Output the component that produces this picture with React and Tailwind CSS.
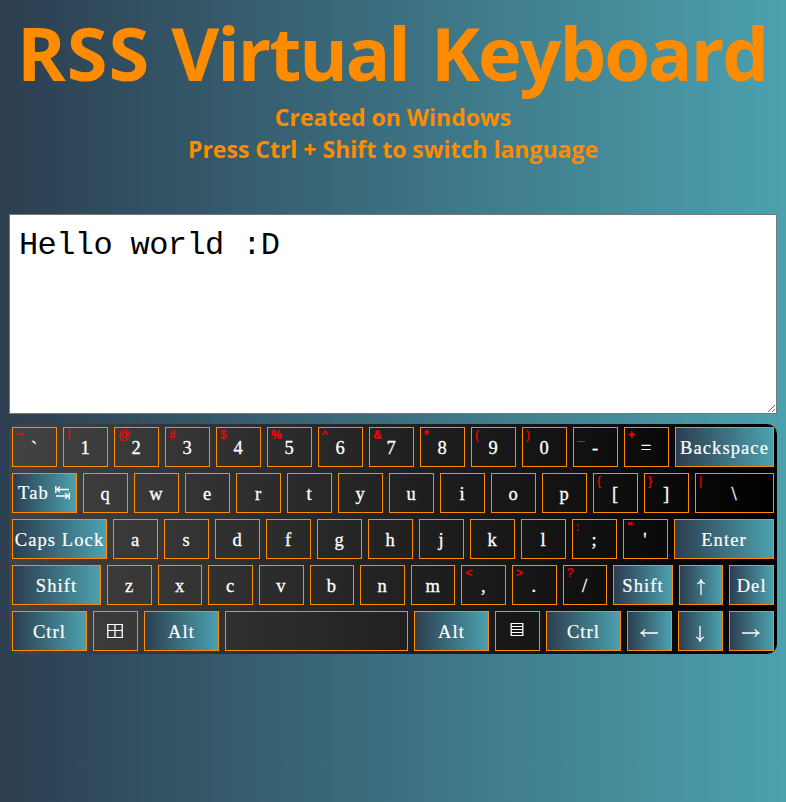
const SERIF = "font-['Liberation_Serif','DejaVu_Sans',serif]";

const WinIcon = () => (
  <svg width="16" height="14" viewBox="0 0 16 14" className="-mt-[1px]" fill="none" stroke="white">
    <path d="M0 .5h16M0 13.5h16M0 6.5h16" />
    <path strokeWidth="1.3" d="M.8 0v14M15.2 0v14M8 0v14" />
  </svg>
);

const MenuIcon = () => (
  <svg width="14" height="13" viewBox="0 0 14 13" className="-mt-[3px]" fill="none" stroke="white">
    <path d="M1 .5h12M1 3.5h12M1 6.5h12M1 9.5h12M1 12.5h12" />
    <path strokeWidth="1.3" d="M1.2 0v13M12.8 0v13" />
  </svg>
);

const TabIcon = () => (
  <svg width="15" height="14" viewBox="0 0 15 14" className="ml-[6px]" fill="none" stroke="white" strokeWidth="1.3">
    <path d="M.8 0v7M1.5 3.5H14M5 .7L1.8 3.5L5 6.3M14.2 6.5v7M1 10H13.5M10 7.2L13.2 10L10 12.8" />
  </svg>
);

const Arrow = ({ turn = "" }) => (
  <svg width="18" height="10" viewBox="0 0 18 10" className={turn} fill="none" stroke="white" strokeWidth="1.3">
    <path d="M1 5H18M5 1.2C4.2 3 3 4.3 1 5C3 5.7 4.2 7 5 8.8" />
  </svg>
);

const VerticalArrow = ({ turn }) => (
  <svg width="10" height="16" viewBox="0 0 10 16" className={turn} fill="none" stroke="white" strokeWidth="1.3">
    <path d="M5 1V16M1.2 5C3 4.2 4.3 3 5 1C5.7 3 7 4.2 8.8 5" />
  </svg>
);

const HEAVY = '~%&*"+';

const k = (label, alt) => ({ label, alt });
const sp = (label, w, pad = "pt-[2px]") => ({ label, w, special: true, pad });
const letters = (s) => s.split("").map((c) => k(c));

const ROWS = [
  [
    k("`", "~"), k("1", "!"), k("2", "@"), k("3", "#"), k("4", "$"), k("5", "%"), k("6", "^"),
    k("7", "&"), k("8", "*"), k("9", "("), k("0", ")"), k("-", "_"), k("=", "+"),
    sp("Backspace", "w-[99px]"),
  ],
  [
    sp(<>Tab<TabIcon /></>, "w-[65px]", "pr-[1px]"), ...letters("qwertyuiop"), k("[", "{"), k("]", "}"),
    { label: "\\", alt: "|", w: "w-[79px]" },
  ],
  [sp("Caps Lock", "w-[95px]"), ...letters("asdfghjkl"), k(";", ":"), k("'", '"'), sp("Enter", "w-[100px]")],
  [
    sp("Shift", "w-[90px]"), ...letters("zxcvbnm"), k(",", "<"), k(".", ">"), k("/", "?"),
    sp("Shift", "w-[60px]"), sp(<VerticalArrow />, "w-[45px]", "pt-[4px] pr-[1px]"), sp("Del", "w-[45px]"),
  ],
  [
    sp("Ctrl", "w-[75px]"), { label: <WinIcon />, pad: "pr-[1px]" }, sp("Alt", "w-[75px]"), { label: "", w: "w-[183px]" },
    sp("Alt", "w-[75px]"), { label: <MenuIcon />, pad: "pr-[1px]" }, sp("Ctrl", "w-[75px]"),
    sp(<Arrow />, "w-[45px]", "pt-[3px] pr-[1px]"), sp(<VerticalArrow turn="rotate-180" />, "w-[45px]", "pt-[5px] pr-[1px]"),
    sp(<Arrow turn="rotate-180" />, "w-[45px]", "pt-[3px] pr-[1px]"),
  ],
];

function Key({ label, alt, w = "w-[45px]", special, pad = "pr-[1px] pt-[2px]" }) {
  return (
    <button
      className={`relative flex h-10 items-center justify-center whitespace-nowrap border border-[#ff8c00] text-[18.5px] leading-none text-white ${SERIF} ${w} ${pad} ${
        special ? "bg-[linear-gradient(to_right,#2c3e50,#4ca1af)] tracking-[1.1px] [-webkit-text-stroke:0.2px_white]" : "[-webkit-text-stroke:0.3px_white]"
      }`}
    >
      {alt && (
        <span
          className={`absolute left-[3px] top-0 font-['Liberation_Sans',sans-serif] text-[12px] leading-[14px] text-[#ff0000] [-webkit-text-stroke:0.2px_#ff0000] ${
            HEAVY.includes(alt) ? "font-bold" : ""
          }`}
        >
          {alt}
        </span>
      )}
      {label}
    </button>
  );
}

export default function App() {
  return (
    <div className="flex min-h-[802px] w-full flex-col bg-[linear-gradient(to_right,#2c3e50,#4ca1af)] px-[9px] font-['Open_Sans','Noto_Sans',sans-serif] font-bold text-[#ff8c00]">
      <h1 className="h-[101px] whitespace-nowrap pl-[8px] text-left text-[74px] leading-[105px]">
        <span className="tracking-[0.9px]">RSS </span>
        <span className="ml-[1px] tracking-[-2.1px]">Virtual </span>
        <span className="ml-[5px] tracking-[-2.1px]">Keyboard</span>
      </h1>
      <p className="h-8 text-center text-[23px] leading-8">Created on Windows</p>
      <p className="h-8 text-center text-[23px] leading-8">Press Ctrl + Shift to switch language</p>
      <textarea
        className="mt-[49px] h-[200px] w-full resize border border-[#767676] bg-white px-[9px] py-[12px] font-['Liberation_Mono',monospace] text-[32px] font-normal leading-[38px] tracking-[-0.6px] text-black outline-none"
        defaultValue="Hello world :D"
      />
      <div className="mt-[10px] flex flex-col gap-[6px] rounded-[10px] bg-[linear-gradient(to_right,#434343,#000000)] p-[3px] font-normal">
        {ROWS.map((row, i) => (
          <div key={i} className="flex gap-[6px]">
            {row.map((key, j) => (
              <Key key={j} {...key} />
            ))}
          </div>
        ))}
      </div>
    </div>
  );
}
